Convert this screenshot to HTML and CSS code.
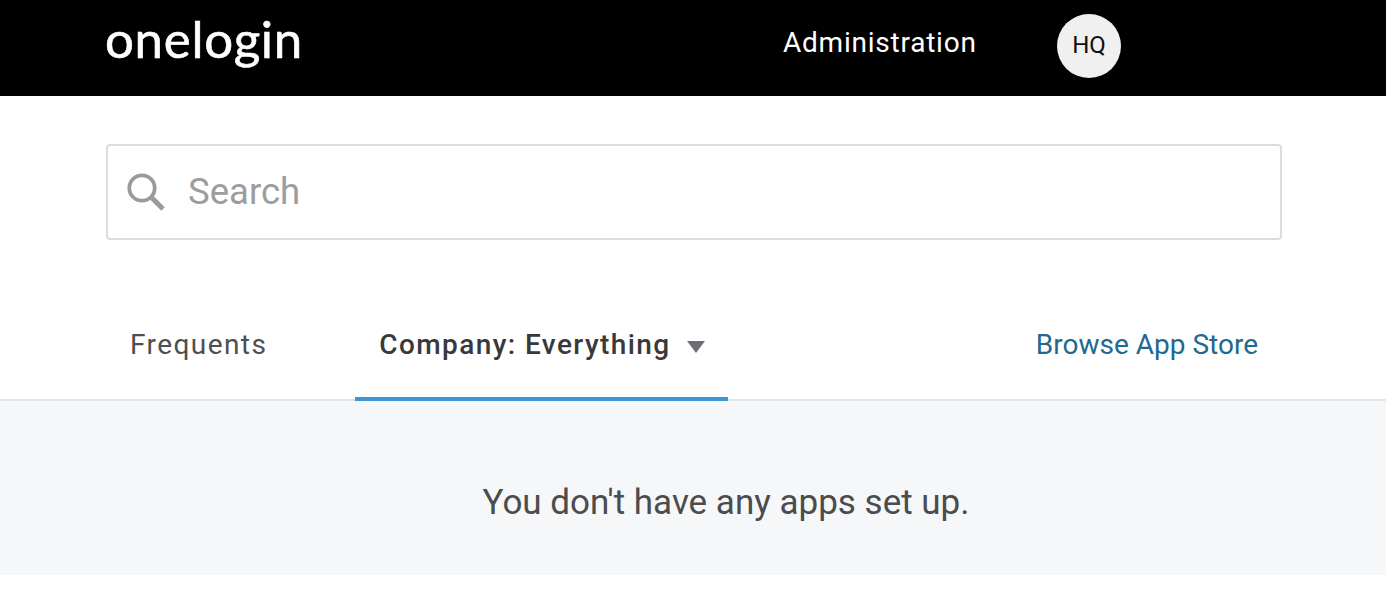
FILE: index.html
```html
<!DOCTYPE html>
<html>
	<head>
		<meta charset="utf-8">
		<title>OneLogin</title>
		<link rel="stylesheet" href="styles.css">
	</head>
	<body>
		<div class="header">
			<div class="logo">onelogin</div>
			<a class="admin">Administration</a>
			<div class="avatar">HQ</div>
		</div>
		<div class="search-wrap">
			<div class="search">
				<svg class="search-icon" width="38" height="38" viewBox="0 0 38 38">
					<circle cx="15" cy="15" r="12.7" fill="none" stroke="#999a9c" stroke-width="3.8"/>
					<path d="M24 24 L36 36" fill="none" stroke="#999a9c" stroke-width="5"/>
				</svg>
				<span class="search-text">Search</span>
			</div>
		</div>
		<div class="tabs">
			<div class="tab">Frequents</div>
			<div class="tab on">Company: Everything<span class="caret"></span></div>
			<a class="store">Browse App Store</a>
		</div>
		<div class="empty">You don't have any apps set up.</div>
	</body>
</html>
```

FILE: styles.css
```css
*{
	padding:0;
	margin:0;
	box-sizing:border-box;
	font-family:"Roboto",sans-serif;
}
body{
	background:#fff;
}
.header{
	height:96px;
	background:#000;
	display:flex;
	align-items:center;
	padding-left:105px;
	color:#fff;
}
.logo{
	width:678px;
	font-family:"Lato",sans-serif;
	font-size:51px;
	letter-spacing:0.7px;
	-webkit-text-stroke:0.6px #fff;
	line-height:50px;
	margin-top:-19px;
}
.admin{
	width:274px;
	font-size:28px;
	letter-spacing:0.77px;
	margin-top:-12px;
}
.avatar{
	width:64px;
	height:64px;
	margin-top:-4px;
	padding-bottom:2px;
	border-radius:50%;
	background:#f0f0f0;
	color:#111;
	font-size:24px;
	display:flex;
	align-items:center;
	justify-content:center;
}
.search-wrap{
	padding:49px 104px 0 106px;
}
.search{
	height:96px;
	border:2px solid #dcdcdc;
	border-radius:4px;
	display:flex;
	align-items:center;
	padding-left:19px;
	margin-top:-1px;
}
.search-icon{
	margin-right:23px;
}
.search-text{
	font-size:36.5px;
	color:#9c9d9f;
	margin-bottom:2px;
}
.tabs{
	height:161px;
	display:flex;
	align-items:flex-end;
	padding:0 128px 0 106px;
	border-bottom:2px solid #e4e5e7;
}
.tab{
	height:106px;
	margin-bottom:-2px;
	padding:0 24px;
	font-size:28px;
	letter-spacing:1.43px;
	line-height:100px;
	color:#4e4f51;
	border-bottom:4px solid transparent;
}
.tab.on{
	margin-left:64px;
	padding:0 23px 0 24px;
	letter-spacing:1.4px;
	font-weight:500;
	color:#38393b;
	border-bottom-color:#3a98d8;
}
.caret{
	display:inline-block;
	margin-left:17px;
	width:0;
	height:0;
	border-left:9px solid transparent;
	border-right:9px solid transparent;
	border-top:12px solid #6e6f75;
	vertical-align:middle;
}
.store{
	margin-left:auto;
	height:104px;
	line-height:100px;
	font-size:28px;
	color:#22688f;
}
.empty{
	height:174px;
	padding-left:66px;
	background:#f6f7f9;
	text-align:center;
	font-size:35px;
	color:#4b4c4e;
	line-height:204px;
}
```
